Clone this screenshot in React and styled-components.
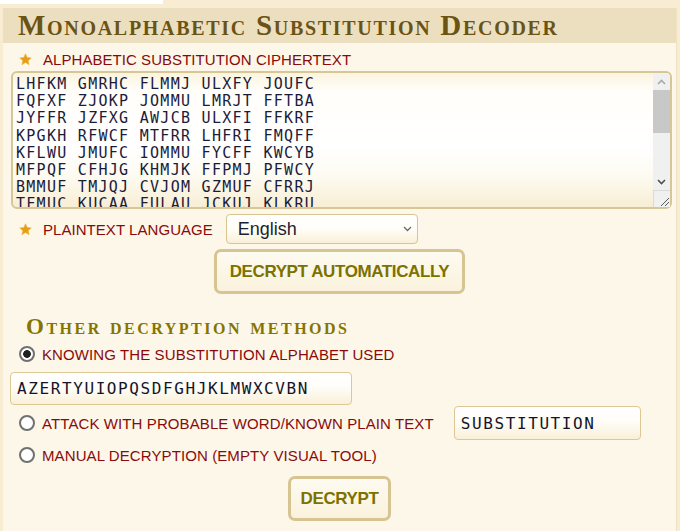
import React from "react";
import styled, { createGlobalStyle } from "styled-components";

const Global = createGlobalStyle`
  html, body { margin: 0; padding: 0; }
  body {
    background: #f8edd3;
    font-family: "Liberation Sans", Arial, sans-serif;
  }
`;

const Page = styled.div`
  min-height: 531px;
  display: flex;
  flex-direction: column;
`;

const TopStrip = styled.div`
  width: 163px;
  height: 4px;
  background: #ffffff;
`;

const Panel = styled.section`
  margin: 4px 3px 0 3px;
  flex: 1;
  display: flex;
  flex-direction: column;
  border-right: 1px solid #efe2c2;
`;

const Header = styled.header`
  height: 35px;
  background: #ebdfbf;
  display: flex;
  align-items: center;
  padding-left: 15px;
`;

const Title = styled.h1`
  margin: 0;
  font-family: "Liberation Serif", "Times New Roman", serif;
  font-weight: bold;
  font-variant: small-caps;
  font-size: 29px;
  line-height: 35px;
  color: #6b5314;
  letter-spacing: 1.7px;
  white-space: nowrap;
`;

const Body = styled.div`
  flex: 1;
  background: #fcf7e9;
  padding: 6px 8px 10px 8px;
  display: flex;
  flex-direction: column;
`;

const FieldLabel = styled.label`
  display: flex;
  align-items: center;
  gap: 11px;
  height: 20px;
  padding-left: 8px;
  font-size: 15px;
  letter-spacing: 0.05px;
  color: #8a0a0a;
  white-space: nowrap;
`;

const StarIcon = () => (
  <svg width="13" height="13" viewBox="0 0 24 24" aria-hidden="true">
    <path
      d="M12 1.5l3.1 6.9 7.4.7-5.6 5 1.7 7.4L12 17.6l-6.6 3.9 1.7-7.4-5.6-5 7.4-.7z"
      fill="#e59f17"
      stroke="#eeb23c"
      strokeWidth="1.2"
      strokeLinejoin="round"
    />
  </svg>
);

const CipherBox = styled.div`
  position: relative;
  margin-top: 2px;
  width: 661px;
  height: 138px;
`;

const CipherArea = styled.textarea`
  display: block;
  box-sizing: border-box;
  width: 100%;
  height: 100%;
  padding: 3px 20px 3px 3px;
  border: 2px solid #d8c796;
  border-radius: 6px;
  background: linear-gradient(to bottom, #fbf4df 0%, #fffefa 14%, #ffffff 55%, #fdfaf0 78%, #f8eed4 100%);
  font-family: "DejaVu Sans Mono", "Liberation Mono", monospace;
  font-size: 15px;
  letter-spacing: 1.28px;
  line-height: 17.2px;
  color: #1b1b3a;
  overflow: hidden;
  resize: none;
  outline: none;
`;

const ScrollBar = styled.div`
  position: absolute;
  top: 2px;
  right: 2px;
  bottom: 2px;
  width: 17px;
  display: flex;
  flex-direction: column;
  background: #f0f0f0;
  border-top-right-radius: 4px;
  overflow: hidden;
`;

const ScrollButton = styled.div`
  height: 17px;
  flex: none;
  display: flex;
  align-items: center;
  justify-content: center;
`;

const ScrollTrack = styled.div`
  flex: 1;
  display: flex;
  flex-direction: column;
`;

const ScrollThumb = styled.div`
  height: 43px;
  background: #c8c8c8;
`;

const Resizer = styled.div`
  height: 17px;
  flex: none;
  box-sizing: border-box;
  border-top: 1px solid #dadada;
  border-left: 1px solid #dadada;
  display: flex;
  align-items: flex-end;
  justify-content: flex-end;
`;

const InlineRow = styled.div`
  margin-top: 5px;
  display: flex;
  align-items: center;
  gap: 13px;
`;

const SelectWrap = styled.span`
  position: relative;
  display: inline-flex;
`;

const LangSelect = styled.select`
  appearance: none;
  box-sizing: border-box;
  width: 192px;
  height: 30px;
  border: 1px solid #d8c48f;
  border-radius: 4px;
  background: linear-gradient(to bottom, #ffffff 0%, #fffdf7 50%, #f9f0d6 100%);
  font-family: "Liberation Sans", Arial, sans-serif;
  font-size: 18px;
  color: #1e1e30;
  padding: 0 20px 0 11px;
  outline: none;
`;

const Chevron = styled.svg`
  position: absolute;
  right: 6px;
  top: 12px;
  pointer-events: none;
`;

const Center = styled.div`
  display: flex;
  justify-content: center;
  margin-top: ${(p) => p.$top}px;
`;

const ActionButton = styled.button`
  box-sizing: border-box;
  height: 45px;
  padding: 0 ${(p) => p.$pad}px;
  border: 3px solid #d6c492;
  border-radius: 7px;
  background: linear-gradient(to bottom, #fdfaf0 0%, #faf2dc 100%);
  font-family: "Liberation Sans", Arial, sans-serif;
  font-weight: bold;
  font-size: 17px;
  letter-spacing: -0.4px;
  color: #7c7200;
  cursor: pointer;
`;

const SectionTitle = styled.h2`
  margin: 20px 0 0 0;
  padding-left: 15px;
  font-family: "Liberation Serif", "Times New Roman", serif;
  font-weight: bold;
  font-variant: small-caps;
  font-size: 23px;
  line-height: 26px;
  color: #857500;
  letter-spacing: 2.5px;
  white-space: nowrap;
`;

const RadioRow = styled.label`
  margin-top: ${(p) => p.$top}px;
  display: flex;
  align-items: center;
  gap: 7px;
  padding-left: 8px;
  min-height: 22px;
  font-size: 15px;
  letter-spacing: 0.1px;
  color: #8a0a0a;
  white-space: nowrap;
`;

const Radio = styled.input.attrs({ type: "radio" })`
  appearance: none;
  margin: 0;
  box-sizing: border-box;
  width: 16px;
  height: 16px;
  border: 2px solid #707070;
  border-radius: 50%;
  background: #ffffff;
  &:checked {
    background: radial-gradient(circle, #1f1f1f 0 3.5px, #ffffff 4.2px);
  }
`;

const TextInput = styled.input`
  box-sizing: border-box;
  width: ${(p) => p.$w}px;
  height: ${(p) => p.$h}px;
  margin-top: ${(p) => p.$top || 0}px;
  margin-left: ${(p) => p.$left || 0}px;
  padding: 0 6px;
  border: 1px solid #dbc894;
  border-radius: 4px;
  background: linear-gradient(to bottom, #ffffff 0%, #fffdf8 45%, #f9f0d8 100%);
  font-family: "DejaVu Sans Mono", "Liberation Mono", monospace;
  font-size: 16px;
  letter-spacing: 1.6px;
  color: #141428;
  outline: none;
`;

const cipher = [
  "LHFKM GMRHC FLMMJ ULXFY JOUFC",
  "FQFXF ZJOKP JOMMU LMRJT FFTBA",
  "JYFFR JZFXG AWJCB ULXFI FFKRF",
  "KPGKH RFWCF MTFRR LHFRI FMQFF",
  "KFLWU JMUFC IOMMU FYCFF KWCYB",
  "MFPQF CFHJG KHMJK FFPMJ PFWCY",
  "BMMUF TMJQJ CVJOM GZMUF CFRRJ",
  "TFMUC KUCAA FULAU JCKUJ KLKRU",
  "FMQFF ULXFY JOMMU GMRHC LHFKM",
  "CFRRJ KWCYB FFTBA ZJOKP JZFXG",
  "AWJCB FYCFF MTFRR TMJQJ KHMJK",
  "PFWCY FFPMJ LMRJT RFWCF JMUFC",
  "IOMMU CFHJG GZMUF FLMMJ ULXFI",
  "KPGKH FQFXF JYFFR BMMUF MFPQF",
  "CVJOM FFKRF LHFRI KFLWU JOUFC",
  "GMRHC ZJOKP",
].join("\n");

export default function App() {
  return (
    <>
      <Global />
      <Page>
        <TopStrip />
        <Panel>
          <Header>
            <Title>Monoalphabetic Substitution Decoder</Title>
          </Header>
          <Body>
            <FieldLabel>
              <StarIcon />
              ALPHABETIC SUBSTITUTION CIPHERTEXT
            </FieldLabel>
            <CipherBox>
              <CipherArea defaultValue={cipher} spellCheck={false} />
              <ScrollBar aria-hidden="true">
                <ScrollButton>
                  <svg width="9" height="6" viewBox="0 0 9 6">
                    <path d="M1 5l3.5-3.5L8 5" fill="none" stroke="#a8a8a8" strokeWidth="1.6" />
                  </svg>
                </ScrollButton>
                <ScrollTrack>
                  <ScrollThumb />
                </ScrollTrack>
                <ScrollButton>
                  <svg width="9" height="6" viewBox="0 0 9 6">
                    <path d="M1 1l3.5 3.5L8 1" fill="none" stroke="#505050" strokeWidth="1.6" />
                  </svg>
                </ScrollButton>
                <Resizer>
                  <svg width="12" height="12" viewBox="0 0 12 12">
                    <path d="M11 3L3 11M11 7L7 11" stroke="#5a5a5a" strokeWidth="1" />
                  </svg>
                </Resizer>
              </ScrollBar>
            </CipherBox>
            <InlineRow>
              <FieldLabel as="span">
                <StarIcon />
                PLAINTEXT LANGUAGE
              </FieldLabel>
              <SelectWrap>
                <LangSelect defaultValue="English">
                  <option>English</option>
                  <option>French</option>
                  <option>German</option>
                  <option>Spanish</option>
                </LangSelect>
                <Chevron width="9" height="6" viewBox="0 0 9 6" aria-hidden="true">
                  <path d="M1 1l3.5 3.5L8 1" fill="none" stroke="#6a6a6a" strokeWidth="1.3" />
                </Chevron>
              </SelectWrap>
            </InlineRow>
            <Center $top={5}>
              <ActionButton $pad={13}>DECRYPT AUTOMATICALLY</ActionButton>
            </Center>
            <SectionTitle>Other decryption methods</SectionTitle>
            <RadioRow $top={3}>
              <Radio name="method" defaultChecked />
              KNOWING THE SUBSTITUTION ALPHABET USED
            </RadioRow>
            <TextInput $w={342} $h={33} $top={7} $left={-1} defaultValue="AZERTYUIOPQSDFGHJKLMWXCVBN" />
            <RadioRow $top={1}>
              <Radio name="method" />
              ATTACK WITH PROBABLE WORD/KNOWN PLAIN TEXT
              <TextInput $w={187} $h={34} $left={13} defaultValue="SUBSTITUTION" />
            </RadioRow>
            <RadioRow $top={4}>
              <Radio name="method" />
              MANUAL DECRYPTION (EMPTY VISUAL TOOL)
            </RadioRow>
            <Center $top={10}>
              <ActionButton $pad={10}>DECRYPT</ActionButton>
            </Center>
          </Body>
        </Panel>
      </Page>
    </>
  );
}
